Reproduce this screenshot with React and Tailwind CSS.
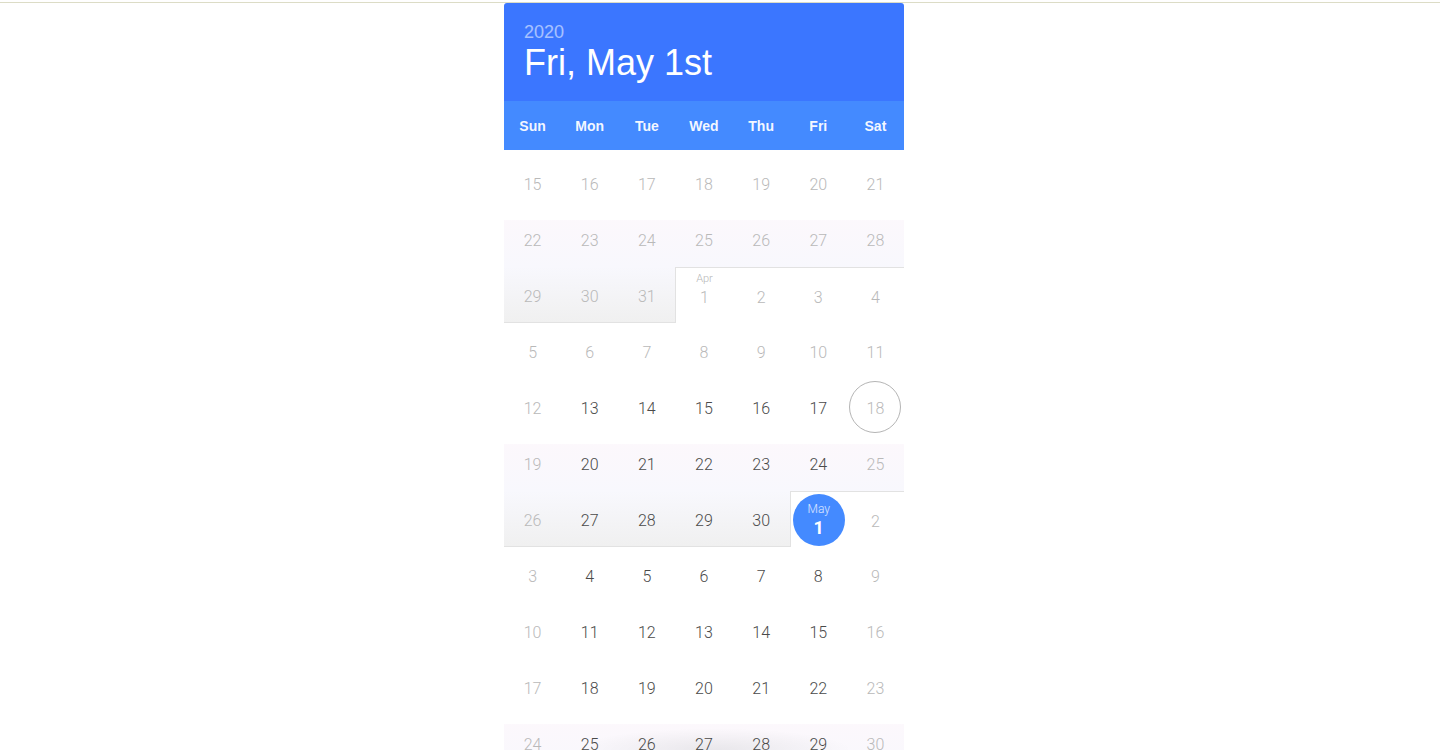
import React from 'react';

const WEEKDAYS = ['Sun', 'Mon', 'Tue', 'Wed', 'Thu', 'Fri', 'Sat'];
const MONTHS = ['Jan', 'Feb', 'Mar', 'Apr', 'May', 'Jun', 'Jul', 'Aug', 'Sep', 'Oct', 'Nov', 'Dec'];

const START = new Date(2020, 2, 15);
const MIN = new Date(2020, 3, 13);
const TODAY = new Date(2020, 3, 18);
const SELECTED = new Date(2020, 4, 1);

const sameDay = (a, b) =>
    a.getFullYear() === b.getFullYear() && a.getMonth() === b.getMonth() && a.getDate() === b.getDate();

// build 12 weeks starting Sun Mar 15 (last one sits below the fold)
const buildRows = () => {
    const rows = [];
    for (let r = 0; r < 12; r++) {
        const row = [];
        for (let c = 0; c < 7; c++) {
            const d = new Date(START);
            d.setDate(START.getDate() + r * 7 + c);
            row.push(d);
        }
        rows.push(row);
    }

    // shading: last (partial) week of month + the week before it
    const meta = rows.map(row => row.map(() => ({ shade: null, top: false, left: false, bottom: false })));
    rows.forEach((row, r) => {
        row.forEach((d, c) => {
            const next = new Date(d);
            next.setDate(d.getDate() + 1);
            const isLast = next.getMonth() !== d.getMonth();
            if (!isLast) return;
            for (let k = 0; k <= c; k++) {
                meta[r][k].shade = 'bottom';
                meta[r][k].bottom = true;
            }
            for (let k = c + 1; k < 7; k++) {
                meta[r][k].top = true;
                if (k === c + 1) meta[r][k].left = true;
            }
            if (r > 0) meta[r - 1].forEach(m => { m.shade = 'top'; });
        });
    });
    return { rows, meta };
};

const DayCell = ({ date, m }) => {
    const weekend = date.getDay() === 0 || date.getDay() === 6;
    const muted = weekend || date < MIN;
    const selected = sameDay(date, SELECTED);
    const today = sameDay(date, TODAY);
    const first = date.getDate() === 1;

    let bg = 'bg-white';
    if (m.shade === 'top') bg = 'bg-[linear-gradient(to_bottom,#ffffff_0%,#ffffff_16%,#fcf8fc_17%,#f8f8fd_100%)]';
    if (m.shade === 'bottom') bg = 'bg-[linear-gradient(to_bottom,#f8f8fd_0%,#f0f0f0_100%)]';

    return (
        <div
            className={`relative h-14 flex items-center justify-center ${bg} ${m.top ? 'border-t border-[#e2e2e2]' : ''} ${m.left ? 'border-l border-[#e2e2e2]' : ''} ${m.bottom ? 'border-b border-[#e2e2e2]' : ''}`}
        >
            {selected ? (
                <div className="w-[52px] h-[52px] rounded-full bg-[#448aff] flex flex-col items-center justify-center text-white">
                    <span className="text-[12px] leading-none font-light text-white/80">{MONTHS[date.getMonth()]}</span>
                    <span className="text-[18px] leading-none font-bold mt-[4px]">{date.getDate()}</span>
                </div>
            ) : (
                <>
                    {today && (
                        <div className="absolute w-[52px] h-[52px] rounded-full border border-[#b5b5b5]" />
                    )}
                    {first && (
                        <span className="absolute top-[5px] text-[11px] leading-none font-light text-[#b8b8b8]">
                            {MONTHS[date.getMonth()]}
                        </span>
                    )}
                    <span className={`text-[16px] leading-none font-light mt-[4px] ${muted ? 'text-[#b9b9b9]' : 'text-[#4a4a4a]'}`}>
                        {date.getDate()}
                    </span>
                </>
            )}
        </div>
    );
};

const App = () => {
    const { rows, meta } = buildRows();

    return (
        <div className="w-[1440px] h-[755px] bg-white overflow-hidden" style={{ fontFamily: "'Liberation Sans', Arial, sans-serif" }}>
            <div className="h-[2px]" />
            <div className="h-px bg-[#dcdcc6]" />

            <div className="ml-[504px] w-[400px] flex flex-col">
                {/* Header */}
                <div className="h-[98px] bg-[#3b76ff] rounded-t-[3px] px-5 pt-[20px]">
                    <div className="text-[18px] leading-none text-white/55">2020</div>
                    <div className="text-[36px] leading-none text-white mt-[4px]">Fri, May 1st</div>
                </div>

                {/* Weekdays */}
                <div className="h-[49px] bg-[#448aff] grid grid-cols-7 items-center pt-[2px]">
                    {WEEKDAYS.map(w => (
                        <div key={w} className="text-center text-[14px] font-bold text-white/95">{w}</div>
                    ))}
                </div>

                {/* Days */}
                <div
                    className="relative h-[600px] overflow-hidden pt-[5px]"
                    style={{ fontFamily: "Roboto, 'Liberation Sans', sans-serif" }}
                >
                    {rows.map((row, r) => (
                        <div key={r} className="grid grid-cols-7">
                            {row.map((d, c) => (
                                <DayCell key={c} date={d} m={meta[r][c]} />
                            ))}
                        </div>
                    ))}
                    <div className="absolute bottom-0 left-[70px] right-[50px] h-[22px] bg-[radial-gradient(ellipse_at_bottom,rgba(0,0,0,0.07),transparent_70%)] pointer-events-none" />
                </div>
            </div>
        </div>
    );
};

export default App;
